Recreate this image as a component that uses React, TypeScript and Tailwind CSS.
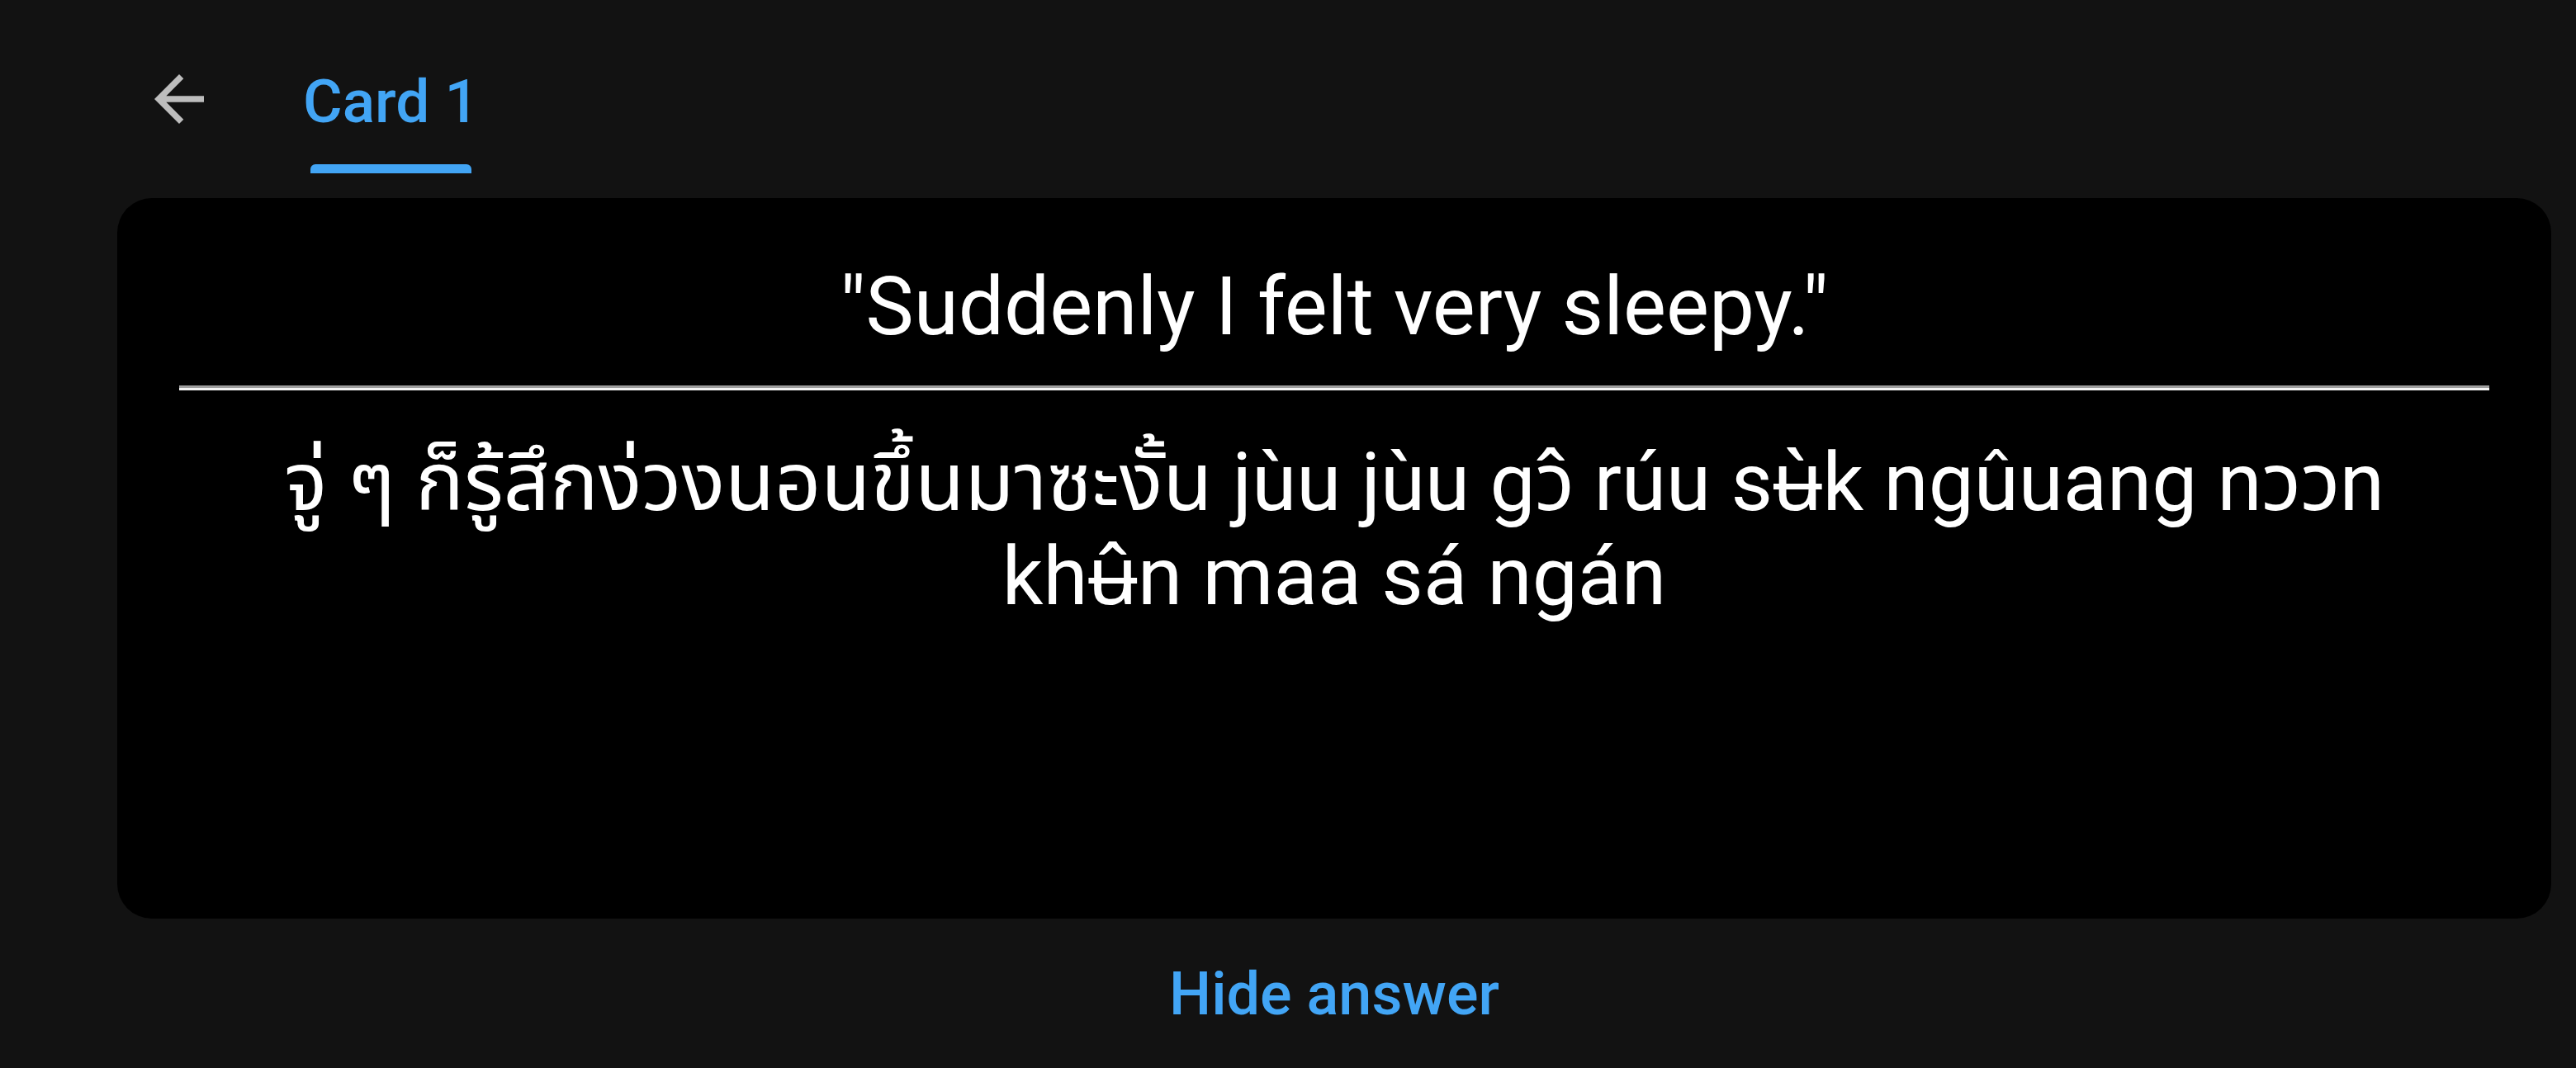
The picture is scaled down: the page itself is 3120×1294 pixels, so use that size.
import React from 'react';

const BackArrow: React.FC = () => (
  <svg width="90" height="90" viewBox="0 0 24 24" fill="#bdbdbd" aria-hidden="true">
    <path d="M20 11H7.83l5.59-5.59L12 4l-8 8 8 8 1.41-1.41L7.83 13H20v-2z" />
  </svg>
);

const App: React.FC = () => {
  return (
    <div className="h-screen overflow-hidden w-full bg-[#121212] font-['Roboto','Noto_Sans_Thai','Noto_Sans_Thai_UI','Noto_Sans',sans-serif]">
      <div className="pl-[142px] pr-[30px]">
        {/* header */}
        <div className="flex items-start h-[240px]">
          <button className="mt-[75px] ml-[30px] p-0">
            <BackArrow />
          </button>
          <div className="ml-[105px] flex flex-col items-center">
            <div className="mt-[80px] text-[73px] leading-[86px] font-medium text-[#42a5f5]">
              Card 1
            </div>
            <div className="mt-[33px] h-[11px] w-[195px] rounded-t-[6px] bg-[#42a5f5]" />
          </div>
        </div>

        {/* card */}
        <div className="h-[873px] rounded-[42px] bg-black px-[75px] flex flex-col items-center">
          <div className="mt-[74px] text-[98px] leading-[115px] text-white text-center">
            "Suddenly I felt very sleepy."
          </div>
          <div className="mt-[38px] w-full border-t-[3px] border-b-[3px] border-t-[#9e9e9e] border-b-[#f2f2f2]" />
          <div className="mt-[55px] px-[40px] text-[98px] leading-[114px] text-white text-center">
            จู่ ๆ ก็รู้สึกง่วงนอนขึ้นมาซะงั้น jùu jùu gɔ̂ rúu sʉ̀k ngûuang nɔɔn khʉ̂n maa sá ngán
          </div>
        </div>

        <div className="mt-[50px] flex justify-center">
          <button className="text-[72px] leading-[84px] font-medium text-[#42a5f5]">
            Hide answer
          </button>
        </div>
      </div>
    </div>
  );
};

export default App;
